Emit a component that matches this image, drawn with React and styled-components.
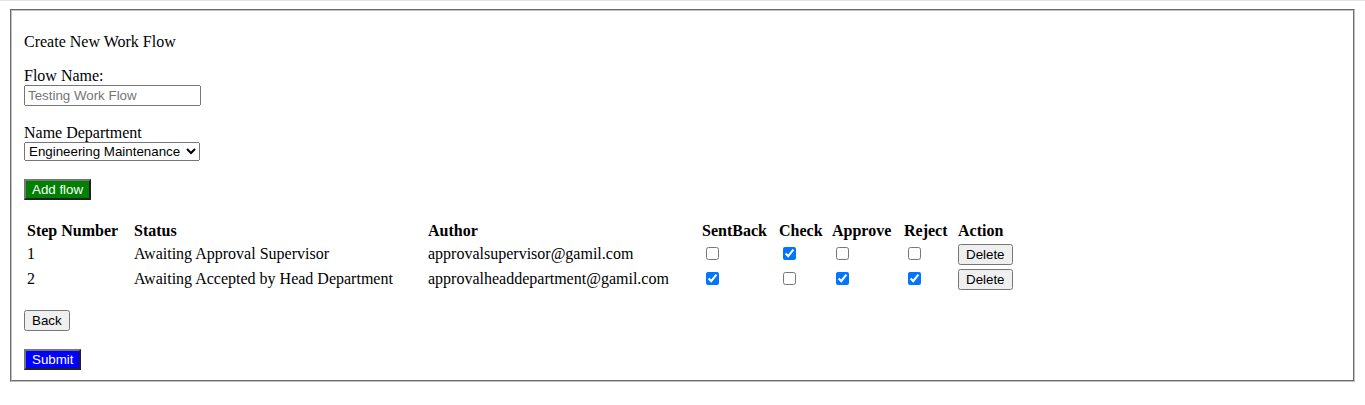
import React from "react";
import styled, { createGlobalStyle } from "styled-components";

const GlobalStyle = createGlobalStyle`
  html {
    border-top: 1px solid #e3e3e3;
    background: #ffffff;
  }
  body {
    margin: 8px;
    font-family: "Liberation Serif", "Times New Roman", serif;
    font-size: 16px;
    color: #000000;
  }
`;

const Panel = styled.fieldset`
  margin: 0 2px;
  padding: 5.6px 12px 10px;
  border: 2px groove rgb(192, 192, 192);
  min-width: 0;
`;

const Stack = styled.div`
  display: flex;
  flex-direction: column;
  align-items: flex-start;
`;

const Title = styled.p`
  margin: 16px 0 0;
`;

const Field = styled.div`
  display: flex;
  flex-direction: column;
  align-items: flex-start;
  margin-top: ${({ $gap }) => $gap}px;
`;

const Label = styled.label`
  display: block;
`;

const TextInput = styled.input`
  box-sizing: border-box;
  width: 177px;
  margin: 0;
  font-family: "Liberation Sans", Arial, sans-serif;
  font-size: 13.333px;

  &::placeholder {
    color: #757575;
  }
`;

const Select = styled.select`
  box-sizing: border-box;
  width: 176px;
  margin: 0;
  font-family: "Liberation Sans", Arial, sans-serif;
  font-size: 13.333px;
  color: #000000;
`;

const colors = {
  green: "#008000",
  blue: "#0000ff",
};

const Button = styled.button`
  margin: ${({ $gap }) => ($gap ? `${$gap}px 0 0` : "0")};
  font-family: "Liberation Sans", Arial, sans-serif;
  font-size: 13.333px;
  padding: 1px 6px;
  ${({ $tone }) =>
    $tone &&
    `
    background-color: ${colors[$tone]};
    color: #ffffff;
    border: 2px outset #767676;
  `}
`;

const StepTable = styled.table`
  margin-top: 19px;
  border-spacing: 2px;
`;

const Th = styled.th`
  padding: 1px;
  text-align: left;
  font-weight: 700;
  width: ${({ $w }) => $w}px;
`;

const Td = styled.td`
  padding: 1px;
  text-align: left;
`;

const Tick = styled.input.attrs({ type: "checkbox" })`
  margin: 3px 3px 3px 4px;
`;

const columns = [
  { label: "Step Number", w: 103 },
  { label: "Status", w: 290 },
  { label: "Author", w: 270 },
  { label: "SentBack", w: 73 },
  { label: "Check", w: 49 },
  { label: "Approve", w: 68 },
  { label: "Reject", w: 50 },
  { label: "Action", w: 56 },
];

const steps = [
  {
    no: 1,
    status: "Awaiting Approval Supervisor",
    author: "approvalsupervisor@gamil.com",
    flags: [false, true, false, false],
  },
  {
    no: 2,
    status: "Awaiting Accepted by Head Department",
    author: "approvalheaddepartment@gamil.com",
    flags: [true, false, true, true],
  },
];

export default function App() {
  return (
    <>
      <GlobalStyle />
      <Panel>
        <Stack>
          <Title>Create New Work Flow</Title>

          <Field $gap={16}>
            <Label htmlFor="flowName">Flow Name:</Label>
            <TextInput id="flowName" placeholder="Testing Work Flow" />
          </Field>

          <Field $gap={18.5}>
            <Label htmlFor="dept">Name Department</Label>
            <Select id="dept" defaultValue="em">
              <option value="em">Engineering Maintenance</option>
            </Select>
          </Field>

          <Button $tone="green" $gap={17.5}>
            Add flow
          </Button>

          <StepTable>
            <thead>
              <tr>
                {columns.map((c) => (
                  <Th key={c.label} $w={c.w}>
                    {c.label}
                  </Th>
                ))}
              </tr>
            </thead>
            <tbody>
              {steps.map((s) => (
                <tr key={s.no}>
                  <Td>{s.no}</Td>
                  <Td>{s.status}</Td>
                  <Td>{s.author}</Td>
                  {s.flags.map((f, i) => (
                    <Td key={i}>
                      <Tick defaultChecked={f} />
                    </Td>
                  ))}
                  <Td>
                    <Button>Delete</Button>
                  </Td>
                </tr>
              ))}
            </tbody>
          </StepTable>

          <Button $gap={17}>Back</Button>
          <Button $tone="blue" $gap={18}>
            Submit
          </Button>
        </Stack>
      </Panel>
    </>
  );
}
